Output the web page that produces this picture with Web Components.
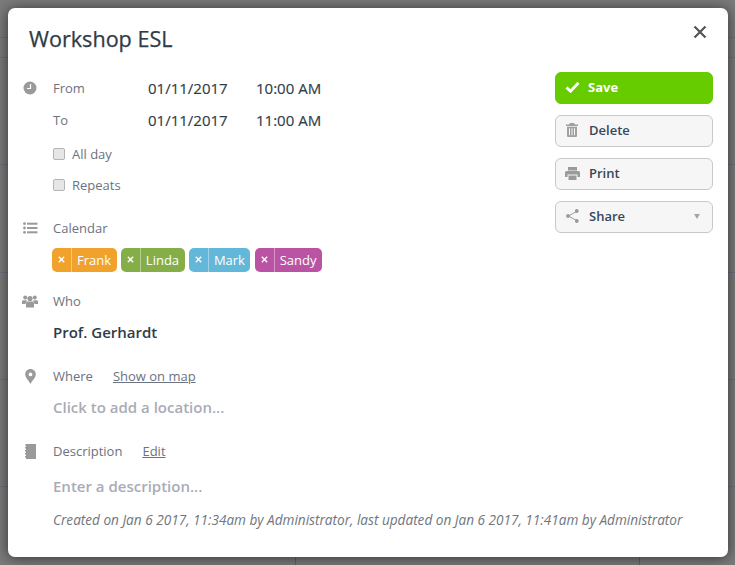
<!DOCTYPE html>
<html><head><meta charset="utf-8">
<style>
html,body{margin:0;padding:0;height:100%}
body{width:735px;height:565px;overflow:hidden;background-color:#7b7b7b;font-family:"Open Sans",sans-serif;
background-image:
linear-gradient(#6c6f80,#6c6f80),linear-gradient(#6c6f80,#6c6f80),linear-gradient(#6c6f80,#6c6f80),linear-gradient(#6c6f80,#6c6f80),linear-gradient(#6c6f80,#6c6f80),linear-gradient(#6c6f80,#6c6f80),linear-gradient(#5f6272,#5f6272),linear-gradient(#5f6272,#5f6272);
background-size:100% 1px,100% 1px,100% 1px,100% 1px,100% 1px,100% 1px,1px 8px,1px 8px;background-repeat:no-repeat;
background-position:0 37px,0 57px,0 164px,0 272px,0 379px,0 486px,295px 557px,639px 557px;
display:flex;padding:8px 7px 8px 8px;box-sizing:border-box}
</style></head><body>
<template id="t-modal"><style>
:host{display:grid;grid-template-columns:533px 158px;grid-template-rows:auto 1fr;width:720px;height:549px;box-sizing:border-box;background:#fff;border-radius:7px;box-shadow:0 1px 14px rgba(0,0,0,.6);padding:0 15px 0 14px;position:relative;color:#2c3e50}
.title{grid-column:1/3;font-size:21.6px;font-weight:400;line-height:30px;margin:16px 0 0 7px;height:47px;color:#2f3b46;-webkit-text-stroke:.25px #2f3b46}
.left{display:flex;flex-direction:column;min-width:0}
.right{display:flex;flex-direction:column;gap:11px;margin-top:1px}
.close{position:absolute;top:17px;right:21px;width:14px;height:14px}
</style>
<div class="title"><slot name="title"></slot></div>
<div class="left"><slot></slot></div>
<div class="right"><slot name="actions"></slot></div>
<svg class="close" viewBox="0 0 14 14"><path d="M1.5 1.5L12.5 12.5M12.5 1.5L1.5 12.5" stroke="#555" stroke-width="2.2" fill="none"/></svg>
</template>

<template id="t-row"><style>
:host{display:flex;align-items:center;height:32px;font-size:13px;color:#6b7280}
.ic{width:16px;margin-right:15px;display:flex;justify-content:center;flex:none;height:16px;align-items:center}
::slotted(.v){font-size:15px;color:#2f3b46;-webkit-text-stroke:.15px #2f3b46}
::slotted(.d){width:108px}
::slotted(.l){width:95px}
</style><span class="ic"><slot name="icon"></slot></span><slot></slot></template>

<template id="t-tag"><style>
:host{display:inline-flex;align-items:center;height:24px;border-radius:5px;color:#fff;font-size:13px;background:var(--c);line-height:24px}
.x{width:19px;text-align:center;height:24px;display:flex;align-items:center;justify-content:center;box-sizing:border-box;padding-bottom:1px}
.t{border-left:1px solid rgba(255,255,255,.4);padding:0 5.5px 0 5px;height:24px;display:block}
</style><span class="x"><svg width="7" height="7" viewBox="0 0 7 7"><path d="M.8.8L6.2 6.2M6.2.8L.8 6.2" stroke="#fff" stroke-width="1.4"/></svg></span><span class="t"><slot></slot></span></template>

<template id="t-btn"><style>
:host{display:flex;align-items:center;height:32px;box-sizing:border-box;padding-bottom:2px;border:1px solid #c8c8c8;border-radius:6px;background:#f6f6f6;font-size:13px;font-weight:600;color:#37475a;position:relative}
:host([primary]){background:#66cc00;border-color:#66cc00;color:#fff;font-weight:700}
.ic{width:32px;flex:none;display:flex;justify-content:center;align-items:center}
</style><span class="ic"><slot name="icon"></slot></span><slot></slot></template>

<template id="t-check"><style>
:host{display:flex;align-items:center;height:31px;margin-left:31px;font-size:13px;color:#6b7280}
.b{width:10px;height:10px;border:1px solid #b4b4b4;border-radius:2px;background:#e6e6e6;margin-right:7px;flex:none}
</style><span class="b"></span><slot></slot></template>

<ev-modal>
<span slot="title">Workshop ESL</span>

<ev-row style="height:33px"><svg slot="icon" width="14" height="14" viewBox="0 0 14 14"><circle cx="7" cy="7" r="6.500" fill="#9a9a9a"/><path d="M7.500 3v4.500H4" stroke="#fff" stroke-width="1.200" fill="none"/></svg><span class="l">From</span><span class="v d">01/11/2017</span><span class="v">10:00 AM</span></ev-row>
<ev-row><span class="l">To</span><span class="v d">01/11/2017</span><span class="v">11:00 AM</span></ev-row>
<ev-check style="margin-top:2px">All day</ev-check>
<ev-check>Repeats</ev-check>

<ev-row style="margin-top:12px"><svg slot="icon" width="15" height="12" viewBox="0 0 15 12"><g fill="#9a9a9a"><circle cx="1.500" cy="1.700" r="1.400"/><circle cx="1.500" cy="6" r="1.400"/><circle cx="1.500" cy="10.300" r="1.400"/><rect x="4" y=".7" width="10.500" height="2"/><rect x="4" y="5" width="10.500" height="2"/><rect x="4" y="9.300" width="10.500" height="2"/></g></svg>Calendar</ev-row>
<div style="display:flex;gap:4.3px;margin:4px 0 0 30px">
<ev-tag style="--c:#f0a22c">Frank</ev-tag><ev-tag style="--c:#85ae48">Linda</ev-tag><ev-tag style="--c:#63b7d9">Mark</ev-tag><ev-tag style="--c:#bb53a4">Sandy</ev-tag>
</div>

<ev-row style="margin-top:13px"><svg slot="icon" width="16" height="13" viewBox="0 0 16 13"><g fill="#9a9a9a"><circle cx="3.200" cy="2.600" r="2"/><circle cx="12.800" cy="2.600" r="2"/><circle cx="8" cy="3.600" r="2.600"/><path d="M0 9V6.600C0 5.700.8 5.200 1.600 5.200H5L3.400 9z"/><path d="M16 9V6.600c0-.9-.8-1.400-1.600-1.400H11l1.600 3.800z"/><path d="M4 12.600V8.400C4 7 5 6.400 6 6.400h4c1 0 2 .6 2 2v4.200z"/></g></svg>Who</ev-row>
<div style="margin:0 0 0 31px;font-size:15px;font-weight:600;line-height:30px;height:30px;color:#2f3b46">Prof. Gerhardt</div>

<ev-row style="margin-top:13px"><svg slot="icon" width="11" height="15" viewBox="0 0 11 15"><path fill="#9a9a9a" fill-rule="evenodd" d="M5.500 0C2.500 0 .2 2.300.2 5.200c0 3.300 3.600 6.500 5.300 9.800 1.700-3.300 5.300-6.500 5.300-9.800C10.800 2.300 8.500 0 5.500 0zm0 3.500a1.900 1.900 0 1 1 0 3.800 1.900 1.900 0 0 1 0-3.800z"/></svg><span style="margin-right:20px">Where</span><span style="text-decoration:underline">Show on map</span></ev-row>
<div style="margin:0 0 0 31px;font-size:15px;font-weight:600;line-height:30px;height:30px;color:#a9acb6">Click to add a location...</div>

<ev-row style="margin-top:13px"><svg slot="icon" width="11" height="15" viewBox="0 0 11 15"><path fill="#9a9a9a" d="M1 0h10v15H1v-1.500H0v-1.500h1v-1.500H0V9h1V7.500H0V6h1V4.500H0V3h1V1.500H0V.5h1z"/></svg><span style="margin-right:20px">Description</span><span style="text-decoration:underline">Edit</span></ev-row>
<div style="margin:4px 0 0 31px;font-size:15px;font-weight:600;line-height:30px;height:30px;color:#a9acb6">Enter a description...</div>
<div style="margin:9px 0 0 31px;font-size:13.6px;font-style:italic;line-height:20px;white-space:nowrap;color:#6f7680">Created on Jan 6 2017, 11:34am by Administrator, last updated on Jan 6 2017, 11:41am by Administrator</div>

<ev-btn slot="actions" primary><svg slot="icon" width="15" height="12" viewBox="0 0 15 12"><path d="M1.500 6.500L5.500 10.300 13.500 1.700" stroke="#fff" stroke-width="2.800" fill="none"/></svg>Save</ev-btn>
<ev-btn slot="actions"><svg slot="icon" width="12" height="14" viewBox="0 0 12 14"><path fill="#a0a0a0" fill-rule="evenodd" d="M4 0h4l1 1.500h3V3H0V1.500h3zM1 3.800h10V13a1 1 0 0 1-1 1H2a1 1 0 0 1-1-1zM3 5.300v7h1v-7zm2.500 0v7h1v-7zm2.500 0v7h1v-7z"/></svg><span style="margin-left:1px">Delete</span></ev-btn>
<ev-btn slot="actions"><svg slot="icon" width="15" height="13" viewBox="0 0 15 13"><path fill="#9a9a9a" fill-rule="evenodd" d="M3 0h9v3.500H3zM1.500 4h12A1.500 1.500 0 0 1 15 5.500V10h-2.500V7.500h-10V10H0V5.500A1.500 1.500 0 0 1 1.500 4zM3.500 8.500h8V13h-8z"/></svg><span style="margin-left:1px">Print</span></ev-btn>
<ev-btn slot="actions"><svg slot="icon" width="13" height="14" viewBox="0 0 13 14"><path d="M10.500 2.500L2.500 7l8 4.500" stroke="#9a9a9a" stroke-width="1" fill="none"/><g fill="#9a9a9a"><circle cx="10.800" cy="2" r="1.900"/><circle cx="2" cy="7" r="1.900"/><circle cx="10.800" cy="12" r="1.900"/></g></svg><span style="margin-left:1px">Share</span><svg style="position:absolute;right:12px;top:12px" width="6" height="5" viewBox="0 0 6 5"><path d="M0 0h6L3 5z" fill="#a5a5a5"/></svg></ev-btn>
</ev-modal>

<script>
for (const [name,id] of [['ev-modal','t-modal'],['ev-row','t-row'],['ev-tag','t-tag'],['ev-btn','t-btn'],['ev-check','t-check']]) {
  customElements.define(name, class extends HTMLElement {
    constructor(){super();this.attachShadow({mode:'open'}).appendChild(document.getElementById(id).content.cloneNode(true));}
  });
}
</script>
</body></html>
